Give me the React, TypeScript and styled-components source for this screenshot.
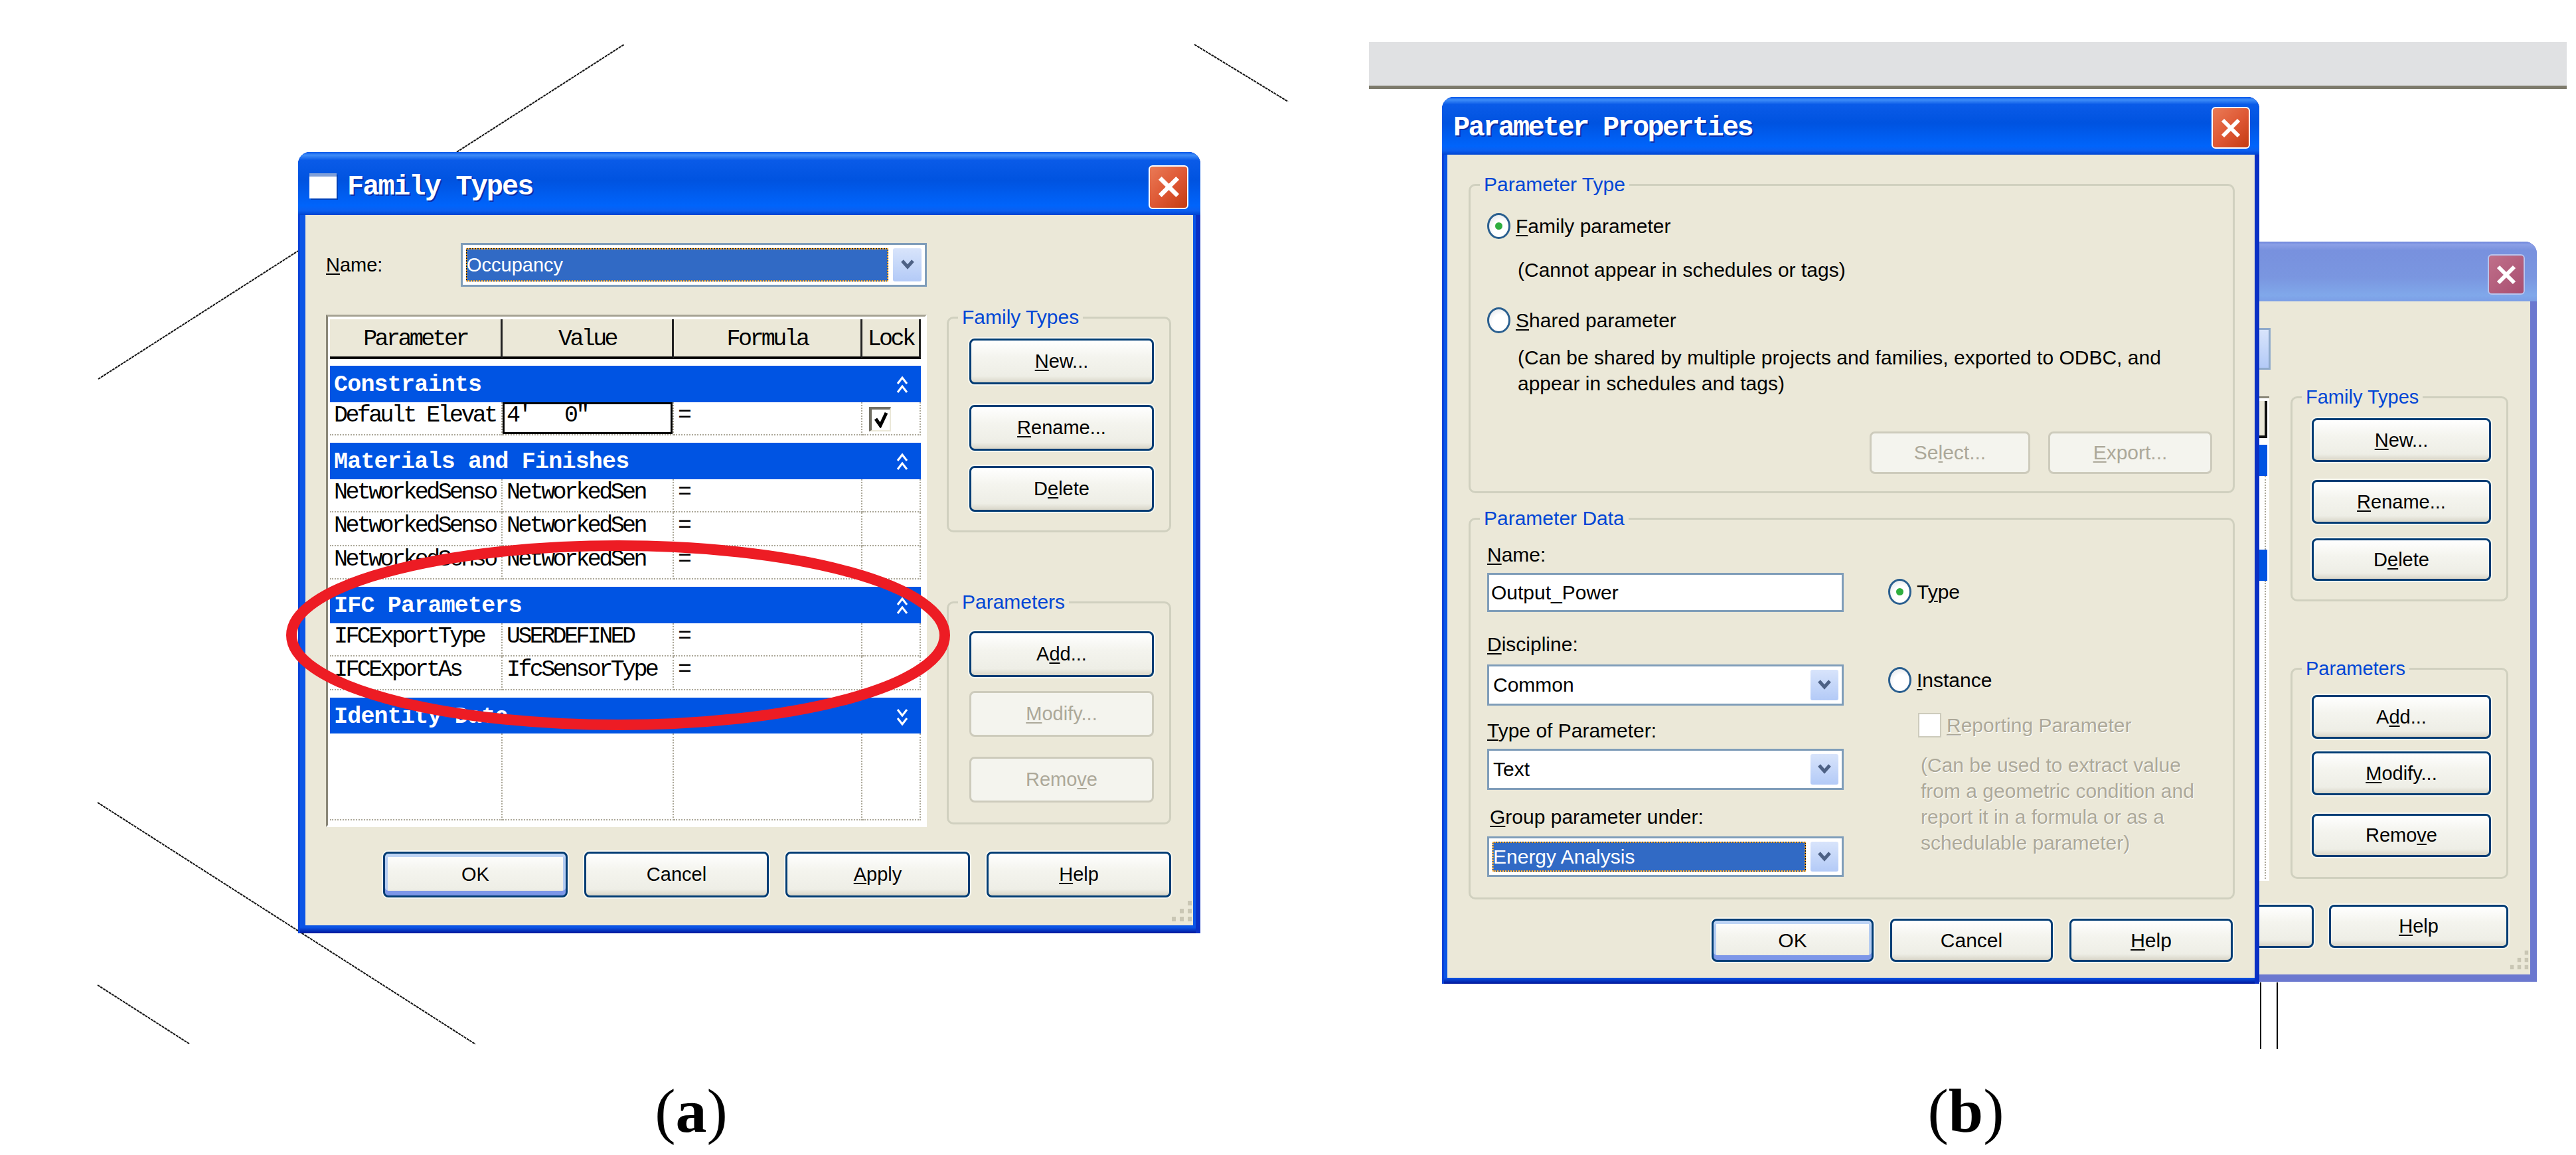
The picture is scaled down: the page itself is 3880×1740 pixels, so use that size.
import { ReactNode } from "react";
import styled, { createGlobalStyle } from "styled-components";

const GlobalStyle = createGlobalStyle`
  html, body { margin: 0; padding: 0; background: #fff; }
  * { box-sizing: border-box; }
`;

const DIALOG_BG = "#ebe8d8";
const SANS = `"Liberation Sans", Arial, sans-serif`;
const MONO = `"Liberation Mono", "Courier New", monospace`;

const Canvas = styled.div`
  position: relative;
  width: 3880px;
  height: 1740px;
  overflow: hidden;
  background: #fff;
  display: grid;
  grid-template-columns: 2062px 1818px;
  grid-template-rows: 1626px 114px;
  font-family: ${SANS};
  color: #000;
`;

const Panel = styled.div`
  position: relative;
`;

const Sketch = styled.svg`
  position: absolute;
  left: 0;
  top: 0;
`;

const Caption = styled.div<{ $shift: number }>`
  font-family: "Liberation Serif", "Times New Roman", serif;
  font-size: 94px;
  line-height: 94px;
  text-align: center;
  transform: translateX(${(p) => p.$shift}px);
  b { font-weight: bold; }
`;

const TopStrip = styled.div`
  margin-top: 63px;
  width: 1804px;
  height: 71px;
  background: #e0e1e3;
  border-bottom: 5px solid #7d7a6c;
`;

// windows sit on the picture like windows on a desktop
const Win = styled.section<{ $x: number; $y: number; $w: number; $h: number; $faded?: boolean }>`
  position: absolute;
  left: ${(p) => p.$x}px;
  top: ${(p) => p.$y}px;
  width: ${(p) => p.$w}px;
  height: ${(p) => p.$h}px;
  border-radius: 18px 18px 0 0;
  overflow: hidden;
  display: flex;
  flex-direction: column;
  background: ${(p) =>
    p.$faded
      ? "#6b78cf"
      : "linear-gradient(180deg, #0b55e6 calc(100% - 9px), #00159a 100%)"};
  box-shadow: ${(p) => (p.$faded ? "none" : "inset -7px 0 0 #0a30c4, inset 3px 0 0 #0a43d8")};
`;

const TitleBar = styled.header<{ $h: number; $faded?: boolean }>`
  height: ${(p) => p.$h}px;
  flex: none;
  display: flex;
  align-items: center;
  padding: 0 18px 0 17px;
  color: #fff;
  background: ${(p) =>
    p.$faded
      ? "linear-gradient(180deg, #6f86dc 0%, #8b9fe6 5%, #7891de 15%, #7a96e0 60%, #80a8ea 90%, #7c9ee6 100%)"
      : "linear-gradient(180deg, #0a58ea 0%, #3f8df8 5%, #0a5be8 13%, #0053e0 45%, #0064fb 85%, #0b5ff0 93%, #0044d0 100%)"};
`;

const AppIcon = styled.span`
  width: 41px;
  height: 38px;
  margin-top: 6px;
  margin-right: 16px;
  background: linear-gradient(180deg, #7f9fd8 0, #7f9fd8 5px, #fff 5px);
  box-shadow: 2px 2px 0 #0040b8;
`;

const TitleText = styled.h1<{ $spacing: number; $top: number }>`
  margin: ${(p) => p.$top}px 0 0;
  flex: 1;
  font: bold 42px/44px ${MONO};
  letter-spacing: ${(p) => p.$spacing}px;
  text-shadow: 2px 2px 0 #0a2fa8;
  white-space: pre;
`;

const CloseBox = styled.span<{ $w: number; $h: number; $top: number; $right?: number; $faded?: boolean }>`
  width: ${(p) => p.$w}px;
  height: ${(p) => p.$h}px;
  margin-top: ${(p) => p.$top}px;
  margin-right: ${(p) => p.$right ?? 0}px;
  border-radius: 6px;
  border: 2px solid ${(p) => (p.$faded ? "#b7c4ee" : "#fff")};
  background: ${(p) =>
    p.$faded
      ? "linear-gradient(135deg, #c0708a, #a84e70)"
      : "linear-gradient(135deg, #ea7a56 0%, #dd5632 55%, #c33c12 100%)"};
  display: flex;
  align-items: center;
  justify-content: center;
`;

const WinBody = styled.div<{ $l: number; $r: number; $b: number }>`
  flex: 1;
  margin: 0 ${(p) => p.$r}px ${(p) => p.$b}px ${(p) => p.$l}px;
  background: ${DIALOG_BG};
  position: relative;
  display: flex;
  flex-direction: column;
`;

const SplitMain = styled.div<{ $cols: string; $gap: number; $left: number; $h: number }>`
  display: grid;
  grid-template-columns: ${(p) => p.$cols};
  column-gap: ${(p) => p.$gap}px;
  padding-left: ${(p) => p.$left}px;
  height: ${(p) => p.$h}px;
  flex: none;
`;

const ActionCol = styled.div<{ $top: number; $gap: number; $side?: number; $sideRight?: number }>`
  padding: ${(p) => p.$top}px ${(p) => p.$sideRight ?? 0}px 0 ${(p) => p.$side ?? 0}px;
  display: flex;
  flex-direction: column;
  gap: ${(p) => p.$gap}px;
`;

const GroupBox = styled.div<{ $h: number; $pad?: string }>`
  position: relative;
  height: ${(p) => p.$h}px;
  padding: ${(p) => p.$pad ?? "0"};
  border: 3px solid #d0d0bf;
  border-radius: 10px;
  flex: none;
`;

const GroupLegend = styled.span<{ $size: number }>`
  position: absolute;
  top: -19px;
  left: 14px;
  padding: 0 6px;
  background: ${DIALOG_BG};
  color: #0046d5;
  font-size: ${(p) => p.$size}px;
  line-height: 34px;
  white-space: nowrap;
`;

const ButtonStack = styled.div<{ $left: number }>`
  display: flex;
  flex-direction: column;
  align-items: flex-start;
  margin-left: ${(p) => p.$left}px;
`;

const XpButton = styled.button<{ $w: number; $h: number; $top?: number; $size?: number; $default?: boolean }>`
  width: ${(p) => p.$w}px;
  height: ${(p) => p.$h}px;
  margin-top: ${(p) => p.$top ?? 0}px;
  padding: 0;
  flex: none;
  font-family: ${SANS};
  font-size: ${(p) => p.$size ?? 29}px;
  color: #000;
  border: 3px solid #003c74;
  border-radius: 8px;
  background: linear-gradient(180deg, #fff 0%, #f4f4ee 40%, #eeeee6 85%, #d9d6c9 100%);
  box-shadow: ${(p) =>
    p.$default
      ? "inset 0 5px 0 #bdd4f5, inset 0 -7px 0 #7d97e8, inset 4px 0 0 #b5cdf2, inset -4px 0 0 #b5cdf2, 0 0 0 2px #f8f7f0"
      : "0 0 0 2px #f8f7f0"};
  &:disabled {
    color: #aca899;
    border-color: #cdcbbc;
    background: #f4f4ee;
    text-shadow: none;
    box-shadow: none;
  }
  u { text-underline-offset: 3px; text-decoration-thickness: 2px; }
`;

const Footer = styled.div<{ $right: number; $gap: number; $top?: number }>`
  display: flex;
  justify-content: flex-end;
  gap: ${(p) => p.$gap}px;
  padding-right: ${(p) => p.$right}px;
  margin-top: ${(p) => p.$top ?? 0}px;
`;

const FormLabel = styled.label<{ $size: number; $w?: number }>`
  display: block;
  font-size: ${(p) => p.$size}px;
  line-height: 39px;
  width: ${(p) => (p.$w ? `${p.$w}px` : "auto")};
  white-space: nowrap;
  u { text-underline-offset: 3px; text-decoration-thickness: 2px; }
`;

const ComboShell = styled.div<{ $w: number; $h: number }>`
  width: ${(p) => p.$w}px;
  height: ${(p) => p.$h}px;
  flex: none;
  display: flex;
  align-items: stretch;
  background: #fff;
  border: 3px solid #7f9db9;
  padding: 5px;
  gap: 7px;
`;

const ComboValue = styled.div<{ $selected?: boolean; $size: number; $pad: number }>`
  flex: 1;
  display: flex;
  align-items: center;
  padding-left: ${(p) => p.$pad}px;
  font-size: ${(p) => p.$size}px;
  color: ${(p) => (p.$selected ? "#fff" : "#000")};
  background: ${(p) => (p.$selected ? "#316ac5" : "transparent")};
  outline: ${(p) => (p.$selected ? "2px dotted #f4a020" : "none")};
  outline-offset: -2px;
  border: ${(p) => (p.$selected ? "1px solid #111" : "none")};
`;

const ComboArrow = styled.div<{ $w: number }>`
  width: ${(p) => p.$w}px;
  flex: none;
  display: flex;
  align-items: center;
  justify-content: center;
  border-radius: 3px;
  background: linear-gradient(180deg, #d8e4fb, #b3caf7);
`;

const NameRow = styled.div`
  display: flex;
  align-items: center;
  margin-top: 42px;
`;

const GridFrame = styled.div`
  margin-top: 42px;
  height: 772px;
  padding: 4px 6px 0 3px;
  border-style: solid;
  border-width: 3px;
  border-color: #a5a293 #fff #fff #8a8778;
  background: #fff;
  position: relative;
`;

const Cols = styled.div`
  display: grid;
  grid-template-columns: 260px 258px 284px 88px;
`;

const HeadCell = styled.div`
  height: 60px;
  background: ${DIALOG_BG};
  border-right: 3px solid #222;
  border-bottom: 4px solid #000;
  font: 35px/60px ${MONO};
  letter-spacing: -3.6px;
  text-align: center;
`;

const BandRow = styled.div<{ $top: number }>`
  height: 54.5px;
  margin-top: ${(p) => p.$top}px;
  background: #0054e3;
  color: #fff;
  display: flex;
  align-items: center;
  justify-content: space-between;
  padding: 4px 19px 0 6px;
  font: bold 35px/44px ${MONO};
  letter-spacing: -0.8px;
  white-space: pre;
`;

const Cell = styled.div<{ $h?: number }>`
  height: ${(p) => p.$h ?? 50.5}px;
  padding-left: 6px;
  font: 35px/41px ${MONO};
  letter-spacing: -3.6px;
  white-space: pre;
  overflow: hidden;
  position: relative;
  border-right: 2px dotted #aca899;
  border-bottom: 2px dotted #aca899;
`;

const ValueEdit = styled.div`
  position: absolute;
  inset: 0 0 0 0;
  border: 3px solid #000;
  padding-left: 3px;
  line-height: 34px;
  background: #fff;
`;

const LockBox = styled.span`
  position: absolute;
  left: 10px;
  top: 7px;
  width: 33px;
  height: 37px;
  background: #fff;
  border-style: solid;
  border-width: 4px 2px 2px 4px;
  border-color: #716f64 #ebe8d8 #ebe8d8 #716f64;
  display: flex;
  align-items: center;
  justify-content: center;
`;

const RadioRow = styled.div<{ $top: number; $left?: number }>`
  display: flex;
  align-items: center;
  gap: 8px;
  margin-top: ${(p) => p.$top}px;
  margin-left: ${(p) => p.$left ?? 0}px;
`;

const RadioDot = styled.span<{ $on?: boolean }>`
  position: relative;
  width: 35px;
  height: 39px;
  flex: none;
  border-radius: 50%;
  border: 3px solid #2a5f8f;
  background: radial-gradient(circle at 60% 60%, #fff 45%, #d9dde2 100%);
  &::after {
    content: "";
    display: ${(p) => (p.$on ? "block" : "none")};
    position: absolute;
    left: 9px;
    top: 11px;
    width: 11px;
    height: 11px;
    border-radius: 50%;
    background: #2fae3f;
  }
`;

const Hint = styled.p<{ $top: number; $left: number; $muted?: boolean; $size: number }>`
  margin: ${(p) => p.$top}px 0 0 ${(p) => p.$left}px;
  font-size: ${(p) => p.$size}px;
  line-height: 39px;
  white-space: pre;
  color: ${(p) => (p.$muted ? "#aca899" : "#000")};
  text-shadow: ${(p) => (p.$muted ? "1px 1px 0 #fff" : "none")};
  u { text-underline-offset: 3px; text-decoration-thickness: 2px; }
`;

const DataGrid = styled.div`
  display: grid;
  grid-template-columns: 537px 1fr;
  column-gap: 67px;
  padding-left: 25px;
`;

const FieldCol = styled.div<{ $pad: number }>`
  padding-top: ${(p) => p.$pad}px;
  display: flex;
  flex-direction: column;
  align-items: flex-start;
`;

const Field = styled.div<{ $top: number; $gap: number; $indent?: number }>`
  margin-top: ${(p) => p.$top}px;
  label { margin-bottom: ${(p) => p.$gap}px; margin-left: ${(p) => p.$indent ?? 0}px; }
`;

const TextEntry = styled.div<{ $size: number }>`
  width: 537px;
  height: 59px;
  background: #fff;
  border: 3px solid #7f9db9;
  padding-left: 3px;
  display: flex;
  align-items: center;
  font-size: ${(p) => p.$size}px;
`;

const FlatCheck = styled.span`
  width: 35px;
  height: 37px;
  flex: none;
  background: #fff;
  border: 2px solid #cdcbbc;
`;

const SliverCombo = styled.div`
  margin-top: 40px;
  height: 63px;
  width: 100%;
  border: 3px solid #8faacb;
  background: linear-gradient(180deg, #d8e4fb, #b3caf7);
`;

const SliverGrid = styled.div`
  margin-top: 40px;
  height: 730px;
  width: 108px;
  background: #fff;
  padding-top: 4px;
  border-top: 3px solid #8a8778;
  border-bottom: 3px solid #fff;
  display: flex;
  flex-direction: column;
`;

const SliverHead = styled.div`
  height: 56px;
  flex: none;
  background: ${DIALOG_BG};
  border-right: 4px solid #111;
  border-bottom: 4px solid #111;
  margin-right: 3px;
`;

const SliverBand = styled.div<{ $top: number }>`
  height: 47px;
  flex: none;
  margin-top: ${(p) => p.$top}px;
  margin-right: 3px;
  background: #0054e3;
`;

const SliverDots = styled.div<{ $h?: number }>`
  flex: ${(p) => (p.$h ? `none` : 1)};
  height: ${(p) => (p.$h ? `${p.$h}px` : "auto")};
  margin-right: 5px;
  border-right: 2px dotted #aca899;
`;

const Gripper = styled.div<{ $right: number; $bottom: number }>`
  position: absolute;
  right: ${(p) => p.$right}px;
  bottom: ${(p) => p.$bottom}px;
  display: flex;
`;

const CloseX = ({ size }: { size: number }) => (
  <svg width={size} height={size} viewBox="0 0 30 30">
    <path d="M3 3 L27 27 M27 3 L3 27" stroke="#fff" strokeWidth="6" fill="none" />
  </svg>
);

const ComboChevron = () => (
  <svg width="22" height="20" viewBox="0 0 22 20">
    <path d="M3 4 L11 13 L19 4" stroke="#4d6185" strokeWidth="5" fill="none" />
  </svg>
);

const DoubleChevron = ({ up }: { up?: boolean }) => (
  <svg width="18" height="28" viewBox="0 0 18 28">
    <path
      d={up ? "M2 12 L9 3 L16 12 M2 25 L9 16 L16 25" : "M2 3 L9 12 L16 3 M2 16 L9 25 L16 16"}
      stroke="#fff"
      strokeWidth="3"
      fill="none"
    />
  </svg>
);

const GripDots = ({ w, h }: { w: number; h: number }) => (
  <svg width={w} height={h} viewBox="0 0 30 33">
    {[
      [24, 0],
      [24, 12],
      [12, 12],
      [24, 24],
      [12, 24],
      [0, 24],
    ].map(([x, y]) => (
      <rect key={`${x}-${y}`} x={x} y={y} width="6" height="7" fill="#c9c6b4" />
    ))}
  </svg>
);

const Combo = ({
  w,
  h,
  size,
  pad,
  arrow,
  selected,
  children,
}: {
  w: number;
  h: number;
  size: number;
  pad: number;
  arrow: number;
  selected?: boolean;
  children: ReactNode;
}) => (
  <ComboShell $w={w} $h={h}>
    <ComboValue $selected={selected} $size={size} $pad={pad}>
      {children}
    </ComboValue>
    <ComboArrow $w={arrow}>
      <ComboChevron />
    </ComboArrow>
  </ComboShell>
);

const rowCells = (param: string, value: string) => (
  <>
    <Cell>{param}</Cell>
    <Cell>{value}</Cell>
    <Cell>=</Cell>
    <Cell />
  </>
);

const FamilyTypesDialog = () => (
  <Win $x={449} $y={229} $w={1359} $h={1177}>
    <TitleBar $h={95}>
      <AppIcon />
      <TitleText $spacing={-1.9} $top={10}>
        Family Types
      </TitleText>
      <CloseBox $w={60} $h={66} $top={10}>
        <CloseX size={33} />
      </CloseBox>
    </TitleBar>
    <WinBody $l={11} $r={11} $b={12}>
      <SplitMain $cols="905px 338px" $gap={30} $left={31} $h={959}>
        <div>
          <NameRow>
            <FormLabel $size={29} $w={203}>
              <u>N</u>ame:
            </FormLabel>
            <Combo w={702} h={66} size={29} pad={0} arrow={43} selected>
              Occupancy
            </Combo>
          </NameRow>
          <GridFrame>
            <Cols>
              <HeadCell>Parameter</HeadCell>
              <HeadCell>Value</HeadCell>
              <HeadCell>Formula</HeadCell>
              <HeadCell>Lock</HeadCell>
            </Cols>
            <BandRow $top={10}>
              Constraints
              <DoubleChevron up />
            </BandRow>
            <Cols>
              <Cell>Default Elevat</Cell>
              <Cell>
                <ValueEdit>{`4'   0"`}</ValueEdit>
              </Cell>
              <Cell>=</Cell>
              <Cell>
                <LockBox>
                  <svg width="22" height="26" viewBox="0 0 22 26">
                    <path d="M3 12 L10 22 L19 3" stroke="#000" strokeWidth="5" fill="none" />
                  </svg>
                </LockBox>
              </Cell>
            </Cols>
            <BandRow $top={11}>
              Materials and Finishes
              <DoubleChevron up />
            </BandRow>
            <Cols>
              {rowCells("NetworkedSenso", "NetworkedSen")}
              {rowCells("NetworkedSenso", "NetworkedSen")}
              {rowCells("NetworkedSenso", "NetworkedSen")}
            </Cols>
            <BandRow $top={11}>
              IFC Parameters
              <DoubleChevron up />
            </BandRow>
            <Cols>
              {rowCells("IFCExportType", "USERDEFINED")}
              {rowCells("IFCExportAs", "IfcSensorType")}
            </Cols>
            <BandRow $top={11}>
              Identity Data
              <DoubleChevron />
            </BandRow>
            <Cols>
              <Cell $h={131} />
              <Cell $h={131} />
              <Cell $h={131} />
              <Cell $h={131} />
            </Cols>
          </GridFrame>
        </div>
        <ActionCol $top={153} $gap={104}>
          <GroupBox $h={325}>
            <GroupLegend $size={30}>Family Types</GroupLegend>
            <ButtonStack $left={31}>
              <XpButton $w={278} $h={69} $top={30}>
                <u>N</u>ew...
              </XpButton>
              <XpButton $w={278} $h={69} $top={31}>
                <u>R</u>ename...
              </XpButton>
              <XpButton $w={278} $h={69} $top={23}>
                D<u>e</u>lete
              </XpButton>
            </ButtonStack>
          </GroupBox>
          <GroupBox $h={336}>
            <GroupLegend $size={30}>Parameters</GroupLegend>
            <ButtonStack $left={31}>
              <XpButton $w={278} $h={69} $top={42}>
                A<u>d</u>d...
              </XpButton>
              <XpButton $w={278} $h={69} $top={21} disabled>
                <u>M</u>odify...
              </XpButton>
              <XpButton $w={278} $h={69} $top={30} disabled>
                Remo<u>v</u>e
              </XpButton>
            </ButtonStack>
          </GroupBox>
        </ActionCol>
      </SplitMain>
      <Footer $right={33} $gap={25}>
        <XpButton $w={278} $h={69} $default>
          OK
        </XpButton>
        <XpButton $w={278} $h={69}>
          Cancel
        </XpButton>
        <XpButton $w={278} $h={69}>
          <u>A</u>pply
        </XpButton>
        <XpButton $w={278} $h={69}>
          <u>H</u>elp
        </XpButton>
      </Footer>
      <Gripper $right={2} $bottom={4}>
        <GripDots w={30} h={33} />
      </Gripper>
    </WinBody>
  </Win>
);

const BackgroundDialog = () => (
  <Win $x={1238} $y={364} $w={521} $h={1115} $faded>
    <TitleBar $h={90} $faded>
      <TitleText $spacing={0} $top={0} />
      <CloseBox $w={56} $h={61} $top={9} $faded>
        <CloseX size={30} />
      </CloseBox>
    </TitleBar>
    <WinBody $l={10} $r={10} $b={11}>
      <SplitMain $cols="110px 328px" $gap={30} $left={0} $h={909}>
        <div>
          <SliverCombo />
          <SliverGrid>
            <SliverHead />
            <SliverBand $top={10} />
            <SliverDots $h={111} />
            <SliverBand $top={0} />
            <SliverDots />
          </SliverGrid>
        </div>
        <ActionCol $top={143} $gap={100}>
          <GroupBox $h={309}>
            <GroupLegend $size={29}>Family Types</GroupLegend>
            <ButtonStack $left={29}>
              <XpButton $w={270} $h={66} $top={30}>
                <u>N</u>ew...
              </XpButton>
              <XpButton $w={270} $h={66} $top={27}>
                <u>R</u>ename...
              </XpButton>
              <XpButton $w={270} $h={64} $top={22}>
                D<u>e</u>lete
              </XpButton>
            </ButtonStack>
          </GroupBox>
          <GroupBox $h={318}>
            <GroupLegend $size={29}>Parameters</GroupLegend>
            <ButtonStack $left={29}>
              <XpButton $w={270} $h={66} $top={38}>
                A<u>d</u>d...
              </XpButton>
              <XpButton $w={270} $h={66} $top={19}>
                <u>M</u>odify...
              </XpButton>
              <XpButton $w={270} $h={65} $top={28}>
                Remo<u>v</u>e
              </XpButton>
            </ButtonStack>
          </GroupBox>
        </ActionCol>
      </SplitMain>
      <Footer $right={33} $gap={23}>
        <XpButton $w={270} $h={65}>
          Apply
        </XpButton>
        <XpButton $w={270} $h={65}>
          <u>H</u>elp
        </XpButton>
      </Footer>
      <Gripper $right={2} $bottom={6}>
        <GripDots w={29} h={30} />
      </Gripper>
    </WinBody>
  </Win>
);

const ParameterPropertiesDialog = () => (
  <Win $x={110} $y={146} $w={1231} $h={1336}>
    <TitleBar $h={87}>
      <TitleText $spacing={-2.7} $top={6}>
        Parameter Properties
      </TitleText>
      <CloseBox $w={58} $h={63} $top={6} $right={-4}>
        <CloseX size={30} />
      </CloseBox>
    </TitleBar>
    <WinBody $l={8} $r={7} $b={9}>
      <ActionCol $top={44} $gap={37} $side={32} $sideRight={30}>
        <GroupBox $h={466} $pad="0 0 0 25px">
          <GroupLegend $size={30}>Parameter Type</GroupLegend>
          <RadioRow $top={41}>
            <RadioDot $on />
            <FormLabel $size={30}>
              <u>F</u>amily parameter
            </FormLabel>
          </RadioRow>
          <Hint $size={30} $top={27} $left={46}>
            (Cannot appear in schedules or tags)
          </Hint>
          <RadioRow $top={37}>
            <RadioDot />
            <FormLabel $size={30}>
              <u>S</u>hared parameter
            </FormLabel>
          </RadioRow>
          <Hint $size={30} $top={17} $left={46}>
            {"(Can be shared by multiple projects and families, exported to ODBC, and\nappear in schedules and tags)"}
          </Hint>
          <Footer $right={31} $gap={27} $top={53}>
            <XpButton $w={242} $h={64} $size={30} disabled>
              Se<u>l</u>ect...
            </XpButton>
            <XpButton $w={247} $h={64} $size={30} disabled>
              <u>E</u>xport...
            </XpButton>
          </Footer>
        </GroupBox>
        <GroupBox $h={575}>
          <GroupLegend $size={30}>Parameter Data</GroupLegend>
          <DataGrid>
            <FieldCol $pad={33}>
              <Field $top={0} $gap={8}>
                <FormLabel $size={30}>
                  <u>N</u>ame:
                </FormLabel>
                <TextEntry $size={30}>Output_Power</TextEntry>
              </Field>
              <Field $top={29} $gap={11}>
                <FormLabel $size={30}>
                  <u>D</u>iscipline:
                </FormLabel>
                <Combo w={537} h={62} size={30} pad={1} arrow={42}>
                  Common
                </Combo>
              </Field>
              <Field $top={18} $gap={8}>
                <FormLabel $size={30}>
                  <u>T</u>ype of Parameter:
                </FormLabel>
                <Combo w={537} h={62} size={30} pad={1} arrow={42}>
                  Text
                </Combo>
              </Field>
              <Field $top={21} $gap={10} $indent={4}>
                <FormLabel $size={30}>
                  <u>G</u>roup parameter under:
                </FormLabel>
                <Combo w={537} h={61} size={30} pad={0} arrow={42} selected>
                  Energy Analysis
                </Combo>
              </Field>
            </FieldCol>
            <FieldCol $pad={89}>
              <RadioRow $top={0}>
                <RadioDot $on />
                <FormLabel $size={30}>
                  T<u>y</u>pe
                </FormLabel>
              </RadioRow>
              <RadioRow $top={94}>
                <RadioDot />
                <FormLabel $size={30}>
                  <u>I</u>nstance
                </FormLabel>
              </RadioRow>
              <RadioRow $top={29} $left={45}>
                <FlatCheck />
                <Hint $size={30} $top={0} $left={0} $muted>
                  <u>R</u>eporting Parameter
                </Hint>
              </RadioRow>
              <Hint $size={30} $top={21} $left={49} $muted>
                {"(Can be used to extract value\nfrom a geometric condition and\nreport it in a formula or as a\nschedulable parameter)"}
              </Hint>
            </FieldCol>
          </DataGrid>
        </GroupBox>
      </ActionCol>
      <Footer $right={33} $gap={25} $top={29}>
        <XpButton $w={244} $h={65} $size={30} $default>
          OK
        </XpButton>
        <XpButton $w={245} $h={65} $size={30}>
          Cancel
        </XpButton>
        <XpButton $w={246} $h={65} $size={30}>
          <u>H</u>elp
        </XpButton>
      </Footer>
    </WinBody>
  </Win>
);

const App = () => (
  <>
    <GlobalStyle />
    <Canvas>
      <Panel>
        <Sketch width="2062" height="1626">
          <g stroke="#111" strokeWidth="2" strokeDasharray="4 1" fill="none">
            <path d="M688 229 L940 67" />
            <path d="M148 571 L449 378" />
            <path d="M1799 67 L1940 153" />
            <path d="M147 1209 L716 1573" />
            <path d="M147 1484 L286 1573" />
          </g>
        </Sketch>
        <FamilyTypesDialog />
        <Sketch width="2062" height="1626">
          <ellipse cx="931" cy="957" rx="492" ry="135" stroke="#ed1c24" strokeWidth="16" fill="none" />
        </Sketch>
      </Panel>
      <Panel>
        <TopStrip />
        <Sketch width="1818" height="1626">
          <path d="M1343 1480 V1580 M1368 1480 V1580" stroke="#000" strokeWidth="2" fill="none" />
        </Sketch>
        <BackgroundDialog />
        <ParameterPropertiesDialog />
      </Panel>
      <Caption $shift={10}>
        (<b>a</b>)
      </Caption>
      <Caption $shift={-10}>
        (<b>b</b>)
      </Caption>
    </Canvas>
  </>
);

export default App;
